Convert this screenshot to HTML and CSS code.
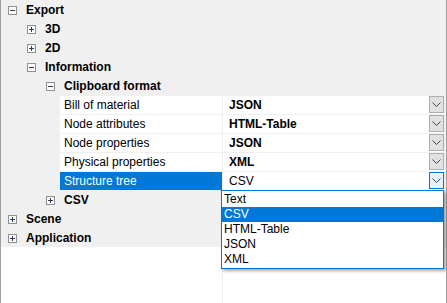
FILE: index.html
```html
<!DOCTYPE html>
<html lang="en">
  <head>
    <meta charset="UTF-8" />
    <meta name="viewport" content="width=device-width, initial-scale=1.0" />
    <title>Export Settings</title>
    <link rel="stylesheet" href="styles.css">
  </head>
  <body>
    <div class="grid">
      <div class="rows">
        <div class="row cat lvl0">
          <svg class="toggle" width="9" height="9" viewBox="0 0 9 9"><rect x="0.5" y="0.5" width="8" height="8" class="box"/><path d="M2 4.5h5" class="sign"/></svg>
          <span>Export</span>
        </div>
        <div class="row cat lvl1">
          <svg class="toggle" width="9" height="9" viewBox="0 0 9 9"><rect x="0.5" y="0.5" width="8" height="8" class="box"/><path d="M2 4.5h5M4.5 2v5" class="sign"/></svg>
          <span>3D</span>
        </div>
        <div class="row cat lvl1">
          <svg class="toggle" width="9" height="9" viewBox="0 0 9 9"><rect x="0.5" y="0.5" width="8" height="8" class="box"/><path d="M2 4.5h5M4.5 2v5" class="sign"/></svg>
          <span>2D</span>
        </div>
        <div class="row cat lvl1">
          <svg class="toggle" width="9" height="9" viewBox="0 0 9 9"><rect x="0.5" y="0.5" width="8" height="8" class="box"/><path d="M2 4.5h5" class="sign"/></svg>
          <span>Information</span>
        </div>
        <div class="row cat lvl2">
          <svg class="toggle" width="9" height="9" viewBox="0 0 9 9"><rect x="0.5" y="0.5" width="8" height="8" class="box"/><path d="M2 4.5h5" class="sign"/></svg>
          <span>Clipboard format</span>
        </div>

        <div class="row prop">
          <div class="label">Bill of material</div>
          <div class="value"><span class="set">JSON</span><div class="drop"><svg width="9" height="5" viewBox="0 0 9 5"><path d="M0.5 0.5l4 4 4-4"/></svg></div></div>
        </div>
        <div class="row prop">
          <div class="label">Node attributes</div>
          <div class="value"><span class="set">HTML-Table</span><div class="drop"><svg width="9" height="5" viewBox="0 0 9 5"><path d="M0.5 0.5l4 4 4-4"/></svg></div></div>
        </div>
        <div class="row prop">
          <div class="label">Node properties</div>
          <div class="value"><span class="set">JSON</span><div class="drop"><svg width="9" height="5" viewBox="0 0 9 5"><path d="M0.5 0.5l4 4 4-4"/></svg></div></div>
        </div>
        <div class="row prop">
          <div class="label">Physical properties</div>
          <div class="value"><span class="set">XML</span><div class="drop"><svg width="9" height="5" viewBox="0 0 9 5"><path d="M0.5 0.5l4 4 4-4"/></svg></div></div>
        </div>
        <div class="row prop selected">
          <div class="label">Structure tree</div>
          <div class="value"><span>CSV</span><div class="drop active"><svg width="9" height="5" viewBox="0 0 9 5"><path d="M0.5 0.5l4 4 4-4"/></svg></div></div>
        </div>

        <div class="row cat lvl2">
          <svg class="toggle" width="9" height="9" viewBox="0 0 9 9"><rect x="0.5" y="0.5" width="8" height="8" class="box"/><path d="M2 4.5h5M4.5 2v5" class="sign"/></svg>
          <span>CSV</span>
        </div>
        <div class="row cat lvl0">
          <svg class="toggle" width="9" height="9" viewBox="0 0 9 9"><rect x="0.5" y="0.5" width="8" height="8" class="box"/><path d="M2 4.5h5M4.5 2v5" class="sign"/></svg>
          <span>Scene</span>
        </div>
        <div class="row cat lvl0">
          <svg class="toggle" width="9" height="9" viewBox="0 0 9 9"><rect x="0.5" y="0.5" width="8" height="8" class="box"/><path d="M2 4.5h5M4.5 2v5" class="sign"/></svg>
          <span>Application</span>
        </div>
      </div>

      <div class="filler">
        <div class="filler-left"></div>
      </div>

      <ul class="list">
        <li>Text</li>
        <li class="current">CSV</li>
        <li>HTML-Table</li>
        <li>JSON</li>
        <li>XML</li>
      </ul>
    </div>
  </body>
</html>
```

FILE: styles.css
```css
body {
  margin: 0;
  font-family: "Liberation Sans", Arial, sans-serif;
  font-size: 12px;
  color: #000;
  background-color: #fff;
}

.grid {
  position: relative;
  width: 447px;
  height: 303px;
  box-sizing: border-box;
  border-left: 1px solid #a0a0a0;
  border-right: 1px solid #a0a0a0;
  display: flex;
  flex-direction: column;
  background-color: #fff;
}

.rows {
  background-color: #f0f0f0;
}

.row {
  height: 18px;
  margin-top: 1px;
  display: flex;
  align-items: center;
  line-height: 18px;
}

.cat {
  font-weight: bold;
}

.toggle {
  margin-right: 9px;
  flex: 0 0 auto;
}

.toggle .box {
  fill: #fcfcfc;
  stroke: #919191;
  stroke-width: 1;
}

.toggle .sign {
  stroke: #2c3a55;
  stroke-width: 1;
}

.lvl0 {
  padding-left: 7px;
}

.lvl1 {
  padding-left: 26px;
}

.lvl2 {
  padding-left: 45px;
}

.prop {
  padding-left: 59px;
  align-items: stretch;
}

.label {
  flex: 0 0 162px;
  margin-right: 1px;
  padding-left: 4px;
  box-sizing: border-box;
  background-color: #fff;
  white-space: nowrap;
}

.value {
  flex: 1;
  margin-right: 2px;
  padding-left: 6px;
  background-color: #fff;
  display: flex;
  justify-content: space-between;
  align-items: flex-start;
}

.value .set {
  font-weight: bold;
}

.selected .label {
  background-color: #0078d7;
  color: #fff;
}

.drop {
  width: 15px;
  height: 17px;
  box-sizing: border-box;
  background-color: #e1e1e1;
  border: 1px solid #adadad;
  display: flex;
  align-items: center;
  justify-content: center;
}

.drop svg path {
  fill: none;
  stroke: #444;
  stroke-width: 1;
}

.drop.active {
  background-color: #e5f1fb;
  border-color: #0078d7;
}

.filler {
  flex: 1;
  display: flex;
}

.filler-left {
  width: 221px;
  border-right: 1px solid #f0f0f0;
}

.list {
  position: absolute;
  left: 220px;
  top: 190px;
  width: 223px;
  box-sizing: border-box;
  margin: 0;
  padding: 1px 0;
  list-style: none;
  background-color: #fff;
  border: 1px solid #0078d7;
  box-shadow: 2px 2px 3px rgba(0, 0, 0, 0.35);
}

.list li {
  height: 15px;
  line-height: 15px;
  padding-left: 2px;
}

.list li.current {
  background-color: #0078d7;
  color: #fff;
}
```
